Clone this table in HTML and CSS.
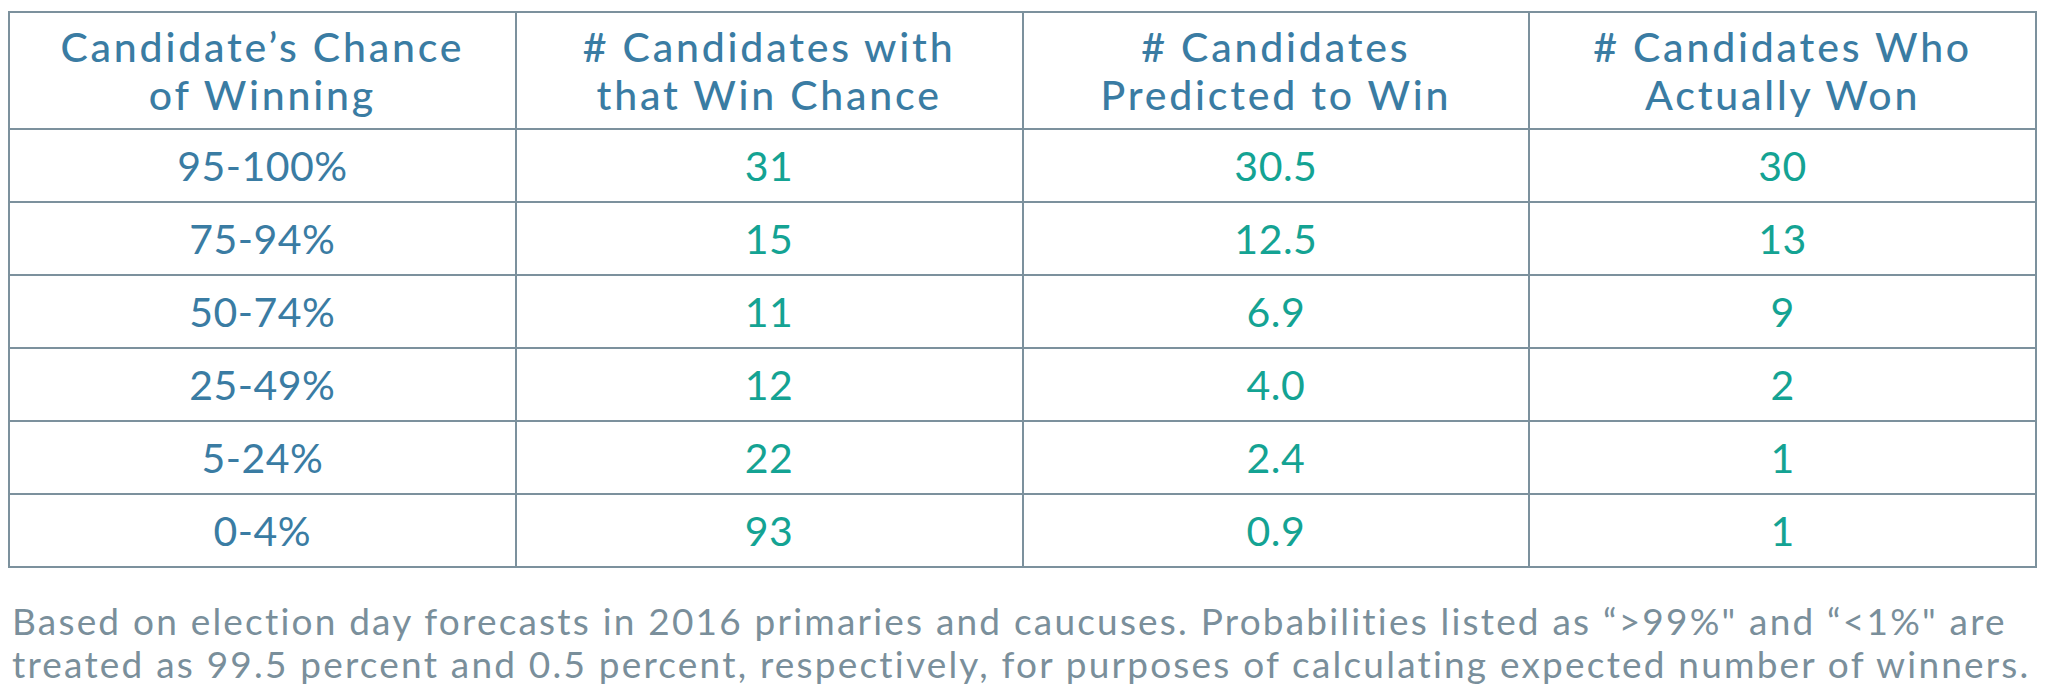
FILE: index.html
```html
<!DOCTYPE html>
<html lang="en">
<head>
<meta charset="utf-8">
<title>Win chance calibration</title>
<link rel="stylesheet" href="styles.css">
</head>
<body>
<main class="page">
  <table class="calib">
    <thead>
      <tr>
        <th>Candidate’s Chance<br>of Winning</th>
        <th># Candidates with<br>that Win Chance</th>
        <th># Candidates<br>Predicted to Win</th>
        <th># Candidates Who<br>Actually Won</th>
      </tr>
    </thead>
    <tbody>
      <tr><td class="range">95-100%</td><td>31</td><td>30.5</td><td>30</td></tr>
      <tr><td class="range">75-94%</td><td>15</td><td>12.5</td><td>13</td></tr>
      <tr><td class="range">50-74%</td><td>11</td><td>6.9</td><td>9</td></tr>
      <tr><td class="range">25-49%</td><td>12</td><td>4.0</td><td>2</td></tr>
      <tr><td class="range">5-24%</td><td>22</td><td>2.4</td><td>1</td></tr>
      <tr><td class="range">0-4%</td><td>93</td><td>0.9</td><td>1</td></tr>
    </tbody>
  </table>
  <p class="note">Based on election day forecasts in 2016 primaries and caucuses. Probabilities listed as “&gt;99%" and “&lt;1%" are<br>treated as 99.5 percent and 0.5 percent, respectively, for purposes of calculating expected number of winners.</p>
</main>
</body>
</html>
```
FILE: styles.css
```css
html, body {
  margin: 0;
  padding: 0;
  background: #ffffff;
}
.page {
  padding: 11px 9px 0 8px;
  font-family: "Lato", "Open Sans", sans-serif;
}
.calib {
  width: 2029px;
  border-collapse: collapse;
  table-layout: fixed;
}
.calib th,
.calib td {
  border: 2px solid #7c919d;
  text-align: center;
  vertical-align: middle;
  padding: 0;
}
.calib th {
  height: 115px;
  font-size: 41px;
  line-height: 48px;
  font-weight: 500;
  color: #3a7ca3;
  letter-spacing: 2.8px;
}
.calib td {
  height: 71px;
  font-size: 41px;
  font-weight: 400;
  color: #14a393;
  letter-spacing: 0.5px;
}
.calib td.range {
  color: #3a7ca3;
}
.note {
  margin: 31px 0 0 4px;
  font-size: 37px;
  line-height: 43px;
  color: #7a8f9b;
  letter-spacing: 2.2px;
  white-space: nowrap;
}
```
